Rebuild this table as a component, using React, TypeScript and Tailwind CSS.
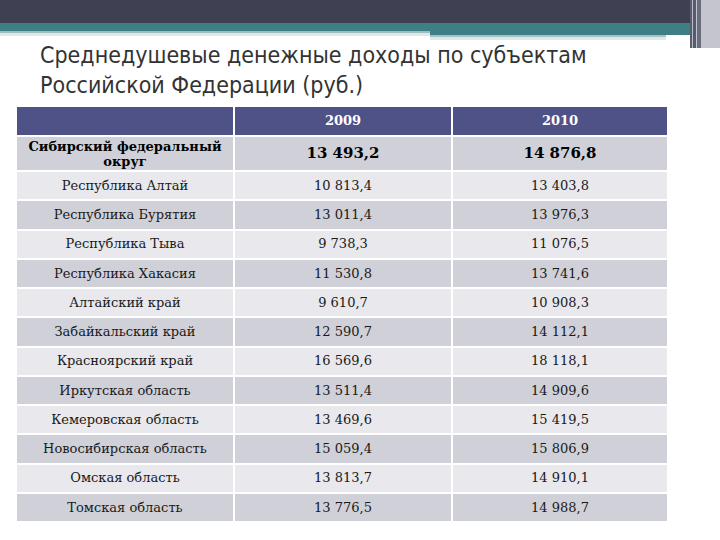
import React from "react";

const rows: [string, string, string][] = [
  ["Республика Алтай", "10 813,4", "13 403,8"],
  ["Республика Бурятия", "13 011,4", "13 976,3"],
  ["Республика Тыва", "9 738,3", "11 076,5"],
  ["Республика Хакасия", "11 530,8", "13 741,6"],
  ["Алтайский край", "9 610,7", "10 908,3"],
  ["Забайкальский край", "12 590,7", "14 112,1"],
  ["Красноярский край", "16 569,6", "18 118,1"],
  ["Иркутская область", "13 511,4", "14 909,6"],
  ["Кемеровская область", "13 469,6", "15 419,5"],
  ["Новосибирская область", "15 059,4", "15 806,9"],
  ["Омская область", "13 813,7", "14 910,1"],
  ["Томская область", "13 776,5", "14 988,7"],
];

export default function App() {
  const serif = { fontFamily: '"DejaVu Serif", "Liberation Serif", serif' };
  return (
    <div className="w-[720px] h-[540px] bg-white overflow-hidden flex flex-col">
      {/* top decoration */}
      <div className="flex h-[50px]">
        <div className="w-[430px] flex flex-col">
          <div className="h-[23px] bg-[#3f4153]" />
          <div className="h-[8px] bg-[#3e7f86]" />
          <div className="h-[2px] bg-[#9fbcbf]" />
          <div className="h-[3px] bg-[#dfe7e7]" />
        </div>
        <div className="w-[236px] flex flex-col">
          <div className="h-[23px] bg-[#3f4153]" />
          <div className="h-[12px] bg-[#3e7f86]" />
          <div className="h-[2px] bg-[#a7c2c4]" />
          <div className="h-[3px] bg-[#dfe9ea]" />
        </div>
        <div className="flex-1 flex flex-col">
          <div className="h-[23px] bg-[#3f4153]" />
          <div className="h-[12px] bg-[#3e7f86]" />
        </div>
        <div className="w-[30px] flex h-[48px]">
          <div className="w-[2px] bg-[#5a5d70]" />
          <div className="w-[1px] bg-[#b8bcc6]" />
          <div className="w-[3px] bg-[#585b6e]" />
          <div className="w-[1px] bg-[#c3c6ce]" />
          <div className="w-[4px] bg-[#6a6d7e]" />
          <div className="flex-1 bg-[#c4c5cf]" />
        </div>
      </div>

      {/* title */}
      <div
        className="pl-[40px] -mt-[10px] text-[23px] leading-[30px] text-[#333333]"
        style={{ fontFamily: '"DejaVu Sans Condensed", "DejaVu Sans", sans-serif' }}
      >
        <div>Среднедушевые денежные доходы по субъектам</div>
        <div>Российской Федерации (руб.)</div>
      </div>

      {/* table */}
      <div className="ml-[17px] mt-[7px] w-[650px] flex flex-col gap-[2px] text-[13px] text-[#1a1a1a]" style={serif}>
        <div className="grid grid-cols-[216px_216px_214px] gap-x-[2px] h-[28px] bg-white">
          <div className="bg-[#4f5287]" />
          <div className="bg-[#4f5287] flex items-center justify-center text-white font-bold text-[13px]">2009</div>
          <div className="bg-[#4f5287] flex items-center justify-center text-white font-bold text-[13px]">2010</div>
        </div>
        <div className="grid grid-cols-[216px_216px_214px] gap-x-[2px] h-[33px]">
          <div className="bg-[#d0d0d8] flex items-center justify-center text-center font-bold text-[13px] leading-[15px] text-black">
            Сибирский федеральный<br />округ
          </div>
          <div className="bg-[#d0d0d8] flex items-center justify-center font-bold text-[15px] text-black">13 493,2</div>
          <div className="bg-[#d0d0d8] flex items-center justify-center font-bold text-[15px] text-black">14 876,8</div>
        </div>
        {rows.map((r, i) => {
          const bg = i % 2 === 0 ? "bg-[#e8e8ed]" : "bg-[#d0d0d8]";
          return (
            <div key={r[0]} className="grid grid-cols-[216px_216px_214px] gap-x-[2px] h-[27.25px]">
              <div className={`${bg} flex items-center justify-center`}>{r[0]}</div>
              <div className={`${bg} flex items-center justify-center`}>{r[1]}</div>
              <div className={`${bg} flex items-center justify-center`}>{r[2]}</div>
            </div>
          );
        })}
      </div>
    </div>
  );
}
